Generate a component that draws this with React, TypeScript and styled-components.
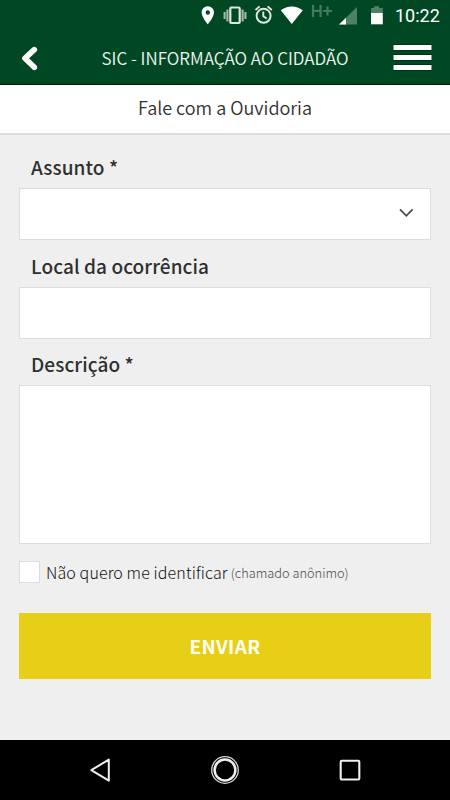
import React from "react";
import styled, { createGlobalStyle } from "styled-components";

const GlobalStyle = createGlobalStyle`
  * { box-sizing: border-box; }
  body { margin: 0; background: #efefef; }
  button { font: inherit; border-radius: 0; outline: none; }
`;

const Screen = styled.div`
  width: 450px;
  height: 800px;
  display: flex;
  flex-direction: column;
  overflow: hidden;
  background: #efefef;
  color: #2f2f2f;
  font-family: "Noto Sans CJK SC", "Noto Sans", sans-serif;
`;

const StatusBar = styled.div`
  height: 32px;
  flex: none;
  display: flex;
  background: #004824;
`;

const StatusIcons = styled.svg`
  display: block;
  width: 392px;
  height: 32px;
`;

const Clock = styled.span`
  padding-left: 3px;
  font: 400 18px/32px Roboto, sans-serif;
  color: #fff;
`;

const Header = styled.header`
  height: 53px;
  flex: none;
  display: grid;
  grid-template-columns: 60px 1fr 60px;
  align-items: center;
  background: #004824;
  border-bottom: 1px solid #001c0c;
`;

const IconButton = styled.button`
  height: 52px;
  padding: 0;
  border: 0;
  background: none;
  svg { display: block; }
`;

const Title = styled.h1`
  margin: 0;
  font-size: 17px;
  line-height: 52px;
  font-weight: 350;
  text-align: center;
  white-space: nowrap;
  color: #f0f5f2;
`;

const SubHeader = styled.h2`
  height: 50px;
  flex: none;
  margin: 0;
  background: #fff;
  border-bottom: 2px solid #dedede;
  font-size: 18px;
  font-weight: 350;
  line-height: 44px;
  text-align: center;
`;

const Form = styled.form`
  flex: 1;
  display: flex;
  flex-direction: column;
  padding: 18px 19px 0;
`;

const Label = styled.label`
  height: 35px;
  flex: none;
  padding-left: 12px;
  font-size: 19px;
  line-height: 28px;
  font-weight: 500;
  letter-spacing: 0.08px;
  white-space: nowrap;
`;

const Field = styled.div<{ $height: number; $gap: number }>`
  height: ${(p) => p.$height}px;
  margin-bottom: ${(p) => p.$gap}px;
  display: flex;
  align-items: center;
  justify-content: flex-end;
  padding-right: 15px;
  background: #fff;
  border: 1px solid #dcdcdc;
`;

const CheckRow = styled.label`
  display: flex;
  align-items: center;
  height: 22px;
  margin-bottom: 30px;
  white-space: nowrap;
`;

const CheckBox = styled.span`
  width: 21px;
  height: 22px;
  margin-right: 6px;
  background: #fff;
  border: 1px solid #dcdcdc;
`;

const CheckText = styled.span`
  font-size: 16px;
  line-height: 22px;
  font-weight: 300;
  letter-spacing: 0.12px;
  color: #111;
`;

const CheckHint = styled.small`
  margin-left: 3px;
  padding-top: 2px;
  font-size: 12.8px;
  line-height: 22px;
  font-weight: 300;
  color: #4c4c4c;
`;

const Submit = styled.button`
  height: 66px;
  padding: 0;
  border: 0;
  background: #e8cf17;
  color: #fffef0;
  font-size: 19px;
  font-weight: 700;
  letter-spacing: 0.3px;
  line-height: 66px;
`;

const NavBar = styled.nav`
  height: 60px;
  flex: none;
  background: #000;
  svg { display: block; }
`;

export default function App() {
  return (
    <Screen>
      <GlobalStyle />
      <StatusBar>
        <StatusIcons viewBox="0 0 392 32" fill="none">
          <path fill="#fff" fillRule="evenodd" d="M207.8 6.3a6.1 6.1 0 0 0-6.2 6.1c0 4.6 6.2 11.8 6.2 11.8s6.2-7.2 6.2-11.8a6.1 6.1 0 0 0-6.2-6.1Zm0 4a2.2 2.2 0 1 1 0 4.4 2.2 2.2 0 0 1 0-4.4Z" />
          <rect x="230.3" y="7.5" width="9.4" height="15.5" rx="1" stroke="#dce8df" strokeWidth="2.2" />
          <path d="M227.4 9.5v12M242.6 9.5v12M224.6 12v7M245.4 12v7" stroke="#a3bbab" strokeWidth="2.1" />
          <circle cx="263.6" cy="15.8" r="7" stroke="#dce8df" strokeWidth="2" />
          <path d="m255.4 10 4.2-3.6m12.2 3.6-4.2-3.6M263.3 11.5v4.8l3.4 2.2" stroke="#dce8df" strokeWidth="1.9" />
          <path d="M280.8 10.2c6.4-5.1 15.6-5.1 22 0L291.8 23.9Z" fill="#fff" />
          <path d="M313 5v12m7.6-12v12m-7.6-6.2h7.6M323 11h9m-4.5-4.5v9" stroke="#467a5e" strokeWidth="2.2" />
          <path d="M357 7v17.5h-18Z" fill="#4d8064" />
          <path d="M346 17.8v6.7h-7Z" fill="#fff" />
          <path d="M371 13V8h3V6.3h5V8h3.8v5Z" fill="#4d8064" />
          <path d="M371 13h11.8v11.3H371Z" fill="#fff" />
        </StatusIcons>
        <Clock>10:22</Clock>
      </StatusBar>
      <Header>
        <IconButton aria-label="Voltar">
          <svg width="60" height="52" fill="none">
            <path d="m34.3 17.6-9.3 8.7 9.3 8.9" stroke="#fff" strokeWidth="5.6" strokeLinecap="round" strokeLinejoin="round" />
          </svg>
        </IconButton>
        <Title>SIC - INFORMAÇÃO AO CIDADÃO</Title>
        <IconButton aria-label="Menu">
          <svg width="60" height="52">
            <path fill="#001c0c" d="M3 12h39v7H3zM3 22h39v7H3zM3 32h39v7H3z" opacity=".45" />
            <path fill="#fff" d="M3.5 13h38v5h-38zM3.5 23h38v5h-38zM3.5 33h38v5h-38z" />
          </svg>
        </IconButton>
      </Header>
      <SubHeader>Fale com a Ouvidoria</SubHeader>
      <Form>
        <Label>Assunto *</Label>
        <Field $height={52} $gap={12}>
          <svg width="17" height="14" fill="none">
            <path d="m2 2.3 6.3 6.5 6.3-6.5" stroke="#4c4c4c" strokeWidth="1.8" />
          </svg>
        </Field>
        <Label>Local da ocorrência</Label>
        <Field $height={52} $gap={11} />
        <Label>Descrição *</Label>
        <Field $height={159} $gap={17} />
        <CheckRow>
          <CheckBox />
          <CheckText>Não quero me identificar</CheckText>
          <CheckHint>(chamado anônimo)</CheckHint>
        </CheckRow>
        <Submit type="button">ENVIAR</Submit>
      </Form>
      <NavBar>
        <svg width="450" height="60" fill="none" stroke="#f0f0f0">
          <path d="M108.8 19.6v21.1L91.3 30.2Z" strokeWidth="2" strokeLinejoin="round" />
          <circle cx="225" cy="30" r="13.3" strokeWidth="1.3" stroke="#d8d8d8" />
          <circle cx="225" cy="30" r="10.4" strokeWidth="2.5" />
          <rect x="340.7" y="20.7" width="18.6" height="18.8" rx="1" strokeWidth="2.1" />
        </svg>
      </NavBar>
    </Screen>
  );
}
